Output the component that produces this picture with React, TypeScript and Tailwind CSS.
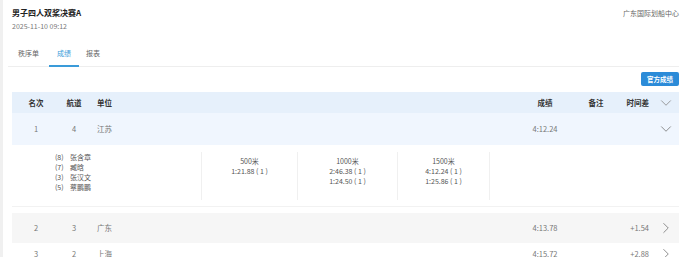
import { ChevronDown, ChevronRight } from "lucide-react";

const font = { fontFamily: '"Noto Sans CJK SC", "Noto Sans", sans-serif' };

const splits = [
  { name: "500米", times: ["1:21.88 ( 1 )"] },
  { name: "1000米", times: ["2:46.38 ( 1 )", "1:24.50 ( 1 )"] },
  { name: "1500米", times: ["4:12.24 ( 1 )", "1:25.86 ( 1 )"] },
];

const crew = [
  ["(8)", "张含章"],
  ["(7)", "臧晗"],
  ["(3)", "张汉文"],
  ["(5)", "蔡鹏鹏"],
];

type RowProps = {
  rank: string;
  lane: string;
  unit: string;
  time: string;
  diff: string;
  className: string;
};

const Row = ({ rank, lane, unit, time, diff, className }: RowProps) => (
  <div className={`flex items-center text-[7.5px] text-[#777] ${className}`}>
    <div className="w-[48px] shrink-0 text-center">{rank}</div>
    <div className="w-[28px] shrink-0 text-center">{lane}</div>
    <div className="flex-1 pl-[9px]">{unit}</div>
    <div className="w-[60px] shrink-0 text-center">{time}</div>
    <div className="w-[42px] shrink-0" />
    <div className="w-[35px] shrink-0 pr-[3px] text-right">{diff}</div>
    <div className="flex w-[27px] shrink-0 justify-center">
      <ChevronRight className="h-[18px] w-[18px] shrink-0 text-[#777]" strokeWidth={1.1} />
    </div>
  </div>
);

export default function App() {
  return (
    <div style={font} className="h-[257px] w-[686px] overflow-hidden border-l-[3px] border-[#f0f0f0] bg-white">
      <div className="flex items-start justify-between pl-[9px] pr-[7px] pt-[7px]">
        <div>
          <div className="text-[8px] font-bold leading-[12px] text-[#222]">男子四人双桨决赛A</div>
          <div className="mt-[1.5px] text-[7px] leading-[10px] text-[#777]">2025-11-10 09:12</div>
        </div>
        <div className="text-[7px] leading-[12px] text-[#666]">广东国际划船中心</div>
      </div>

      <div className="ml-[5px] mr-[7px] mt-[17.5px] flex border-b border-[#eeeeee] text-[7px] text-[#666]">
        <div className="px-[10px] pb-[8px] leading-[10px]">秩序单</div>
        <div className="-mb-px border-b-2 border-[#3a9bd9] px-[8px] pb-[7px] leading-[10px] text-[#3a9bd9]">成绩</div>
        <div className="px-[7px] pb-[8px] leading-[10px]">报表</div>
      </div>

      <div className="mr-[7px] mt-[5px] flex justify-end">
        <div className="h-[14px] rounded-[2px] bg-[#2b8bd8] px-[6px] text-[6.5px] font-bold leading-[14px] text-white">
          官方成绩
        </div>
      </div>

      <div className="ml-[9px] mr-[7px] mt-[6px]">
        <div className="flex h-[21px] items-center bg-[#e6f0fb] text-[7.5px] font-bold text-[#333]">
          <div className="w-[48px] shrink-0 text-center">名次</div>
          <div className="w-[28px] shrink-0 text-center">航道</div>
          <div className="flex-1 pl-[9px]">单位</div>
          <div className="w-[60px] shrink-0 text-center">成绩</div>
          <div className="w-[42px] shrink-0 text-center">备注</div>
          <div className="w-[35px] shrink-0 pr-[3px] text-right">时间差</div>
          <div className="flex w-[27px] shrink-0 justify-center">
            <ChevronDown className="h-[18px] w-[18px] shrink-0 text-[#888]" strokeWidth={1.1} />
          </div>
        </div>

        <div className="flex h-[32px] items-center bg-[#f0f6fe] text-[7.5px] text-[#777]">
          <div className="w-[48px] shrink-0 text-center">1</div>
          <div className="w-[28px] shrink-0 text-center">4</div>
          <div className="flex-1 pl-[9px]">江苏</div>
          <div className="w-[60px] shrink-0 text-center">4:12.24</div>
          <div className="w-[42px] shrink-0" />
          <div className="w-[35px] shrink-0" />
          <div className="flex w-[27px] shrink-0 justify-center">
            <ChevronDown className="h-[18px] w-[18px] shrink-0 text-[#777]" strokeWidth={1.1} />
          </div>
        </div>

        <div className="flex h-[62px] items-start border-b border-[#f2f2f2] pt-[7px] text-[7px] text-[#555]">
          <div className="w-[189px] pl-[43px] leading-[10px]">
            {crew.map(([seat, name]) => (
              <div key={name} className="flex gap-[5px]">
                <span className="w-[10px]">{seat}</span>
                <span>{name}</span>
              </div>
            ))}
          </div>
          {splits.map((s, i) => (
            <div
              key={s.name}
              className={`h-[48px] border-l border-[#f0f0f0] pt-[4px] text-center leading-[10px] ${
                i === 1 ? "w-[100px]" : i === 0 ? "w-[96px]" : "w-[93px] border-r"
              }`}
            >
              <div>{s.name}</div>
              {s.times.map((t) => (
                <div key={t}>{t}</div>
              ))}
            </div>
          ))}
        </div>

        <div className="mt-[6px] flex flex-col">
          <Row rank="2" lane="3" unit="广东" time="4:13.78" diff="+1.54" className="h-[30px] bg-[#f6f6f6]" />
          <Row rank="3" lane="2" unit="上海" time="4:15.72" diff="+2.88" className="h-[22px] bg-white" />
        </div>
      </div>
    </div>
  );
}
